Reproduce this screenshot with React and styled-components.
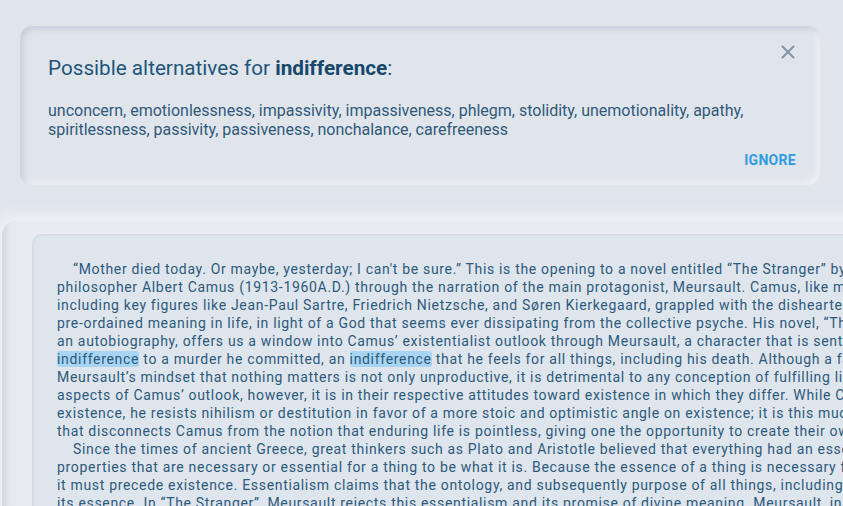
import React from "react";
import styled, { createGlobalStyle } from "styled-components";

const Global = createGlobalStyle`
  html, body { margin: 0; padding: 0; }
  body {
    background: #e0e5ec;
    font-family: Roboto, "Liberation Sans", sans-serif;
    overflow: hidden;
    width: 843px;
    height: 506px;
  }
`;

const Page = styled.div`
  padding: 26px 0 0 20px;
  display: flex;
  flex-direction: column;
`;

const Card = styled.section`
  position: relative;
  width: 800px;
  height: 159px;
  box-sizing: border-box;
  border-radius: 12px;
  background: #e0e5ec;
  box-shadow: inset 3px 3px 6px rgba(163, 177, 198, 0.45),
    inset -3px -3px 6px rgba(255, 255, 255, 0.55);
  padding: 30px 24px 0 28px;
  display: flex;
  flex-direction: column;
`;

const Title = styled.h2`
  margin: 0;
  font-size: 20.7px;
  line-height: 24px;
  font-weight: 400;
  color: #21557a;
  b { font-weight: 700; color: #17486c; }
`;

const Synonyms = styled.p`
  margin: 21px 0 0;
  font-size: 16px;
  line-height: 19px;
  color: #30597a;
  max-width: 740px;
`;

const Actions = styled.div`
  display: flex;
  justify-content: flex-end;
  margin-top: 13px;
`;

const TextButton = styled.button`
  border: 0;
  background: none;
  padding: 0;
  font-family: Roboto, "Liberation Sans", sans-serif;
  font-weight: 700;
  font-size: 14px;
  line-height: 16px;
  letter-spacing: 0.3px;
  color: #2f9be0;
`;

const Close = styled.button`
  position: absolute;
  top: 19px;
  right: 25px;
  width: 14px;
  height: 14px;
  padding: 0;
  border: 0;
  background: none;
  display: flex;
`;

const Sheet = styled.div`
  margin: 36px 0 0 -18px;
  width: 900px;
  height: 400px;
  border-radius: 14px 0 0 0;
  background: linear-gradient(to right, #d2d8e0 0, #e4e8ee 8px, #e9edf2 16px, #e9edf2 100%);
  box-shadow: -6px -6px 14px rgba(255, 255, 255, 0.55);
  padding: 13px 0 0 30px;
  box-sizing: border-box;
`;

const Editor = styled.div`
  border-radius: 10px 0 0 0;
  background: #dfe5ec;
  height: 100%;
  padding: 26px 0 0 25px;
  box-sizing: border-box;
  box-shadow: inset 1px 1px 2px rgba(163, 177, 198, 0.25);
`;

const Paragraph = styled.p`
  margin: 0;
  font-size: 14px;
  line-height: 18px;
  letter-spacing: 0.68px;
  color: #2c5a7c;
  white-space: nowrap;
  text-indent: 16px;
`;

const Mark = styled.span`
  background: #a9d5f5;
  border-radius: 3px;
`;

const p1 = [
  "\u201CMother died today. Or maybe, yesterday; I can't be sure.\u201D This is the opening to a novel entitled \u201CThe Stranger\u201D by the French",
  "philosopher Albert Camus (1913-1960A.D.) through the narration of the main protagonist, Meursault. Camus, like many existentialists,",
  "including key figures like Jean-Paul Sartre, Friedrich Nietzsche, and S\u00F8ren Kierkegaard, grappled with the disheartening absence of",
  "pre-ordained meaning in life, in light of a God that seems ever dissipating from the collective psyche. His novel, \u201CThe Stranger\u201D, while not",
  "an autobiography, offers us a window into Camus\u2019 existentialist outlook through Meursault, a character that is sentenced to death for his",
];

const p1b = [
  "Meursault\u2019s mindset that nothing matters is not only unproductive, it is detrimental to any conception of fulfilling life. Despite the similar",
  "aspects of Camus\u2019 outlook, however, it is in their respective attitudes toward existence in which they differ. While Camus accepts",
  "existence, he resists nihilism or destitution in favor of a more stoic and optimistic angle on existence; it is this much more hopeful outlook",
  "that disconnects Camus from the notion that enduring life is pointless, giving one the opportunity to create their own meaning.",
];

const p2 = [
  "Since the times of ancient Greece, great thinkers such as Plato and Aristotle believed that everything had an essence, a set of",
  "properties that are necessary or essential for a thing to be what it is. Because the essence of a thing is necessary for it to exist,",
  "it must precede existence. Essentialism claims that the ontology, and subsequently purpose of all things, including humanity, is",
  "its essence. In \u201CThe Stranger\u201D, Meursault rejects this essentialism and its promise of divine meaning. Meursault, in his apathy,",
];

const Lines = ({ lines }) =>
  lines.map((l, i) => (
    <React.Fragment key={i}>
      {l}
      {i < lines.length - 1 && <br />}
    </React.Fragment>
  ));

export default function App() {
  return (
    <>
      <Global />
      <Page>
        <Card>
          <Close aria-label="Close">
            <svg width="14" height="14" viewBox="0 0 14 14">
              <path d="M1 1 L13 13 M13 1 L1 13" stroke="#7d95a7" strokeWidth="2" strokeLinecap="butt" />
            </svg>
          </Close>
          <Title>
            Possible alternatives for <b>indifference</b>:
          </Title>
          <Synonyms>
            unconcern, emotionlessness, impassivity, impassiveness, phlegm, stolidity, unemotionality, apathy,
            spiritlessness, passivity, passiveness, nonchalance, carefreeness
          </Synonyms>
          <Actions>
            <TextButton>IGNORE</TextButton>
          </Actions>
        </Card>
        <Sheet>
          <Editor>
            <Paragraph>
              <Lines lines={p1} />
              <br />
              <Mark>indifference</Mark> to a murder he committed, an <Mark>indifference</Mark> that he feels for all things, including his death. Although a fair amount of
              <br />
              <Lines lines={p1b} />
            </Paragraph>
            <Paragraph>
              <Lines lines={p2} />
            </Paragraph>
          </Editor>
        </Sheet>
      </Page>
    </>
  );
}
